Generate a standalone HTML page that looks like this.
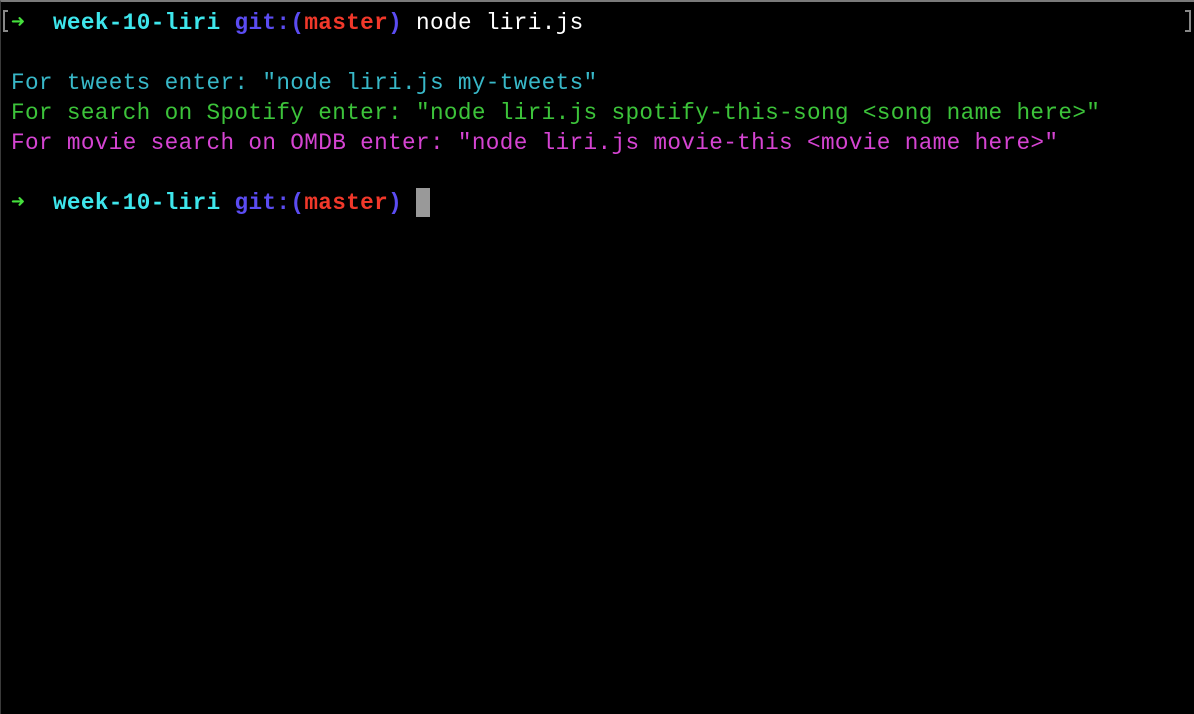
<!DOCTYPE html>
<html><head><meta charset="utf-8"><style>
html,body{margin:0;padding:0;}
body{width:1194px;height:714px;background:#000;position:relative;overflow:hidden;border-top:2px solid #7a7a7a;box-sizing:border-box;border-left:1px solid #3a3a3a;}
.t{position:absolute;left:10px;font-family:"Liberation Mono",monospace;font-size:22.7px;letter-spacing:0.35px;line-height:30px;white-space:pre;color:#fff;}
.ar{color:#45e03c;font-weight:bold}
.cy{color:#3ee6ec;font-weight:bold}
.bl{color:#5b4cf2;font-weight:bold}
.rd{color:#f2382a;font-weight:bold}
.br{position:absolute;width:2px;background:#888;}
</style></head><body>
<div class="br" style="left:2px;top:8px;height:22px;"></div>
<div class="br" style="left:2px;top:8px;height:2px;width:5px;"></div>
<div class="br" style="left:2px;top:28px;height:2px;width:5px;"></div>
<div class="br" style="left:1188px;top:8px;height:22px;"></div>
<div class="br" style="left:1184px;top:8px;height:2px;width:5px;"></div>
<div class="br" style="left:1184px;top:28px;height:2px;width:5px;"></div>
<div class="t" style="top:6px"><span class="ar">➜</span>  <span class="cy">week-10-liri</span> <span class="bl">git:(</span><span class="rd">master</span><span class="bl">)</span> node liri.js</div>
<div class="t" style="top:66px;color:#38b8c8">For tweets enter: "node liri.js my-tweets"</div>
<div class="t" style="top:96px;color:#3cc33a">For search on Spotify enter: "node liri.js spotify-this-song &lt;song name here&gt;"</div>
<div class="t" style="top:126px;color:#d544d2">For movie search on OMDB enter: "node liri.js movie-this &lt;movie name here&gt;"</div>
<div class="t" style="top:186px"><span class="ar">➜</span>  <span class="cy">week-10-liri</span> <span class="bl">git:(</span><span class="rd">master</span><span class="bl">)</span> </div>
<div style="position:absolute;left:415px;top:186px;width:14px;height:29px;background:#999;"></div>
</body></html>
